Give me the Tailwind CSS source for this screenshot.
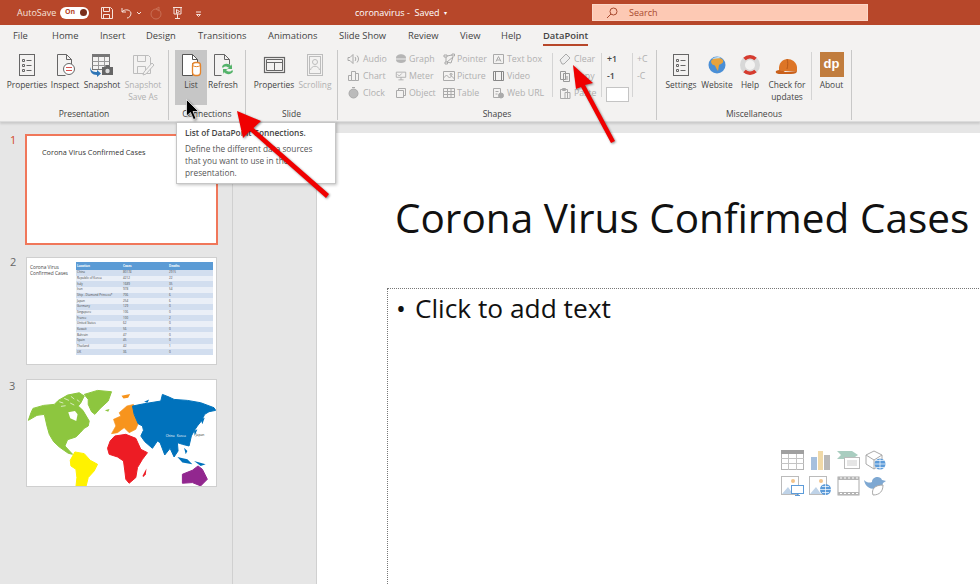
<!DOCTYPE html>
<html>
<head>
<meta charset="utf-8">
<script src="https://cdn.jsdelivr.net/npm/@tailwindcss/browser@4"></script>
</head>
<body class="m-0 overflow-hidden bg-[#e6e6e6]">
<div class="relative w-[980px] h-[584px] overflow-hidden font-['Open_Sans','Noto_Sans',sans-serif] text-[#444]">

  <!-- Title bar -->
  <header class="h-[25px] bg-[#b7472a] flex items-center text-white text-[9px] pl-[17px]">
    <span class="w-[43px] text-[#f6e3dc]">AutoSave</span>
    <span class="w-[29px] h-[12px] rounded-full bg-white flex items-center justify-between pl-[5px] pr-[2px] text-[#b7472a] text-[7px] font-bold"><span>On</span><span class="w-[7px] h-[7px] rounded-full bg-[#7a2f1c]"></span></span>
    <svg class="ml-[6px]" width="110" height="16" viewBox="0 0 110 16" fill="none" stroke="#f6e3dc" stroke-width="1">
      <path d="M6.500 2.500h9l2 2v9h-11z M8.500 2.500v4h6v-4 M8.500 13.500v-4h6v4"/>
      <path d="M27 3v4h4 M27 7c2-3 8-3 9 1 0 3-2 5-4 5"/>
      <path d="M42 7l2 2 2-2" />
      <circle cx="61" cy="9" r="5" stroke="#c96f55"/><path d="M61 4l3-2v4z" stroke="#c96f55"/>
      <path d="M78 2.500h9 M79 3v6h7V3 M82.500 9v4 M80 13.500h5 M81.500 4.500l3 2-3 2z"/>
      <path d="M101 7h5 M101.500 9.500l2 2 2-2z" />
    </svg>
    <span class="ml-[150px] w-[237px] whitespace-nowrap">coronavirus&nbsp;-&nbsp; Saved&nbsp; <span class="text-[6px] align-middle">▾</span></span>
    <div class="w-[276px] h-[17px] bg-[#fdc9b4] border border-[#fbd7c8] flex items-center pl-[12px] text-[#a8492f]">
      <svg width="14" height="14" viewBox="0 0 14 14" fill="none" stroke="#a8492f"><circle cx="8.500" cy="5.500" r="3.500"/><path d="M6 8l-4 4"/></svg>
      <span class="ml-[10px]">Search</span>
    </div>
  </header>

  <!-- Tabs -->
  <nav class="h-[22px] bg-[#f3f2f1] flex items-center text-[9.4px] pl-[13px] pt-[1px] text-[#444]">
    <span class="w-[39px]">File</span>
    <span class="w-[48px]">Home</span>
    <span class="w-[46px]">Insert</span>
    <span class="w-[52px]">Design</span>
    <span class="w-[70px]">Transitions</span>
    <span class="w-[71px]">Animations</span>
    <span class="w-[69px]">Slide Show</span>
    <span class="w-[52px]">Review</span>
    <span class="w-[41px]">View</span>
    <span class="w-[42px]">Help</span>
    <span class="relative font-semibold">DataPoint<span class="absolute left-0 right-0 top-[15px] h-[2px] bg-[#b7472a]"></span></span>
  </nav>

  <!-- Ribbon -->
  <section class="h-[75px] bg-[#f3f2f1] flex text-[8.400px] leading-[12px] shadow-[0_2px_2px_rgba(0,0,0,0.12)] relative z-10 border-b border-[#dcdcdc]">

    <!-- Presentation -->
    <div class="w-[169px] flex flex-col border-r border-[#c8c8c8] mt-[3px] h-[70px]">
      <div class="flex h-[62px] pl-[7px]">
        <div class="w-[40px] flex flex-col items-center">
          <svg class="mt-[3px]" width="20" height="24" viewBox="0 0 20 24" fill="none" stroke="#666"><rect x="2.500" y="1.500" width="15" height="21"/><path d="M5.500 6.500h2v2h-2z M5.500 11.500h2v2h-2z M5.500 16.500h2v2h-2z M9.500 7.500h5 M9.500 12.500h5 M9.500 17.500h5"/></svg>
          <span class="mt-[2px] whitespace-nowrap">Properties</span>
        </div>
        <div class="w-[36px] flex flex-col items-center">
          <svg class="mt-[3px]" width="24" height="24" viewBox="0 0 24 24" fill="none" stroke="#666"><path d="M4.500 1.500h9l5 5v5 M13.500 1.500v5h5 M4.500 1.500v21h8"/><circle cx="16" cy="16" r="5.500" fill="#fff"/><path d="M13 14.500h6 M13 17.500h6" stroke="#d9534f"/></svg>
          <span class="mt-[2px]">Inspect</span>
        </div>
        <div class="w-[38px] flex flex-col items-center">
          <svg class="mt-[3px]" width="26" height="24" viewBox="0 0 26 24" fill="none"><rect x="3.500" y="1.500" width="17" height="15" stroke="#777"/><path d="M3 1h18v3H3z" fill="#777"/><path d="M3.500 8.500h17 M3.500 12.500h17 M9.500 4v12 M15.500 4v12" stroke="#999"/><path d="M1 14c1 4 3 5 7 5v-2l4 3.500-4 3.500v-2c-5 0-7-3-7-8z" fill="#2e75b6"/><path d="M13 14h3l1-2h3l1 2h3v8H13z" fill="#666"/><circle cx="18.500" cy="18" r="2.200" fill="#ddd"/></svg>
          <span class="mt-[2px]">Snapshot</span>
        </div>
        <div class="w-[44px] flex flex-col items-center text-[#b0b0b0] text-center">
          <svg class="mt-[3px]" width="24" height="24" viewBox="0 0 24 24" fill="none" stroke="#bdbdbd"><path d="M2.500 2.500h15l2 2v16h-17z M6.500 2.500v6h8v-6 M6.500 20.500v-7h8v7"/><path d="M13 19l8-9 2 2-8 9-3 1z" fill="#f3f2f1"/></svg>
          <span class="mt-[2px]">Snapshot<br>Save As</span>
        </div>
      </div>
      <div class="text-center text-[8.500px] mt-[1px]">Presentation</div>
    </div>

    <!-- Connections -->
    <div class="w-[77px] flex flex-col border-r border-[#c8c8c8] mt-[3px] h-[70px]">
      <div class="flex h-[62px] pl-[6px]">
        <div class="w-[32px] h-[55px] bg-[#c6c6c6] flex flex-col items-center">
          <svg class="mt-[3px]" width="24" height="24" viewBox="0 0 24 24" fill="none"><path d="M3.500 1.500h10l5 5v4h-5v12h-10z" fill="#fff" stroke="#555"/><path d="M13.500 1.500v5h5" stroke="#555"/><rect x="13.500" y="9.500" width="8" height="13" rx="3" fill="#fff" stroke="#e5842b" stroke-width="1.300"/><path d="M13.500 12.500c2 1.500 6 1.500 8 0" stroke="#e5842b"/></svg>
          <span class="mt-[2px]">List</span>
        </div>
        <div class="w-[32px] flex flex-col items-center">
          <svg class="mt-[3px]" width="24" height="24" viewBox="0 0 24 24" fill="none"><path d="M3.500 1.500h10l5 5v5 M13.500 1.500v5h5 M3.500 1.500v21h7" stroke="#666"/><path d="M11 14c1-4 7-4 9-1l1-2v5h-5l2-1c-2-2-5-2-6 0z M22 18c-1 4-7 4-9 1l-1 2v-5h5l-2 1c2 2 5 2 6 0z" fill="#54b36a"/></svg>
          <span class="mt-[2px]">Refresh</span>
        </div>
      </div>
      <div class="text-center text-[8.500px] mt-[1px]">Connections</div>
    </div>

    <!-- Slide -->
    <div class="w-[92px] flex flex-col border-r border-[#c8c8c8] mt-[3px] h-[70px]">
      <div class="flex h-[62px] pl-[8px]">
        <div class="w-[40px] flex flex-col items-center">
          <svg class="mt-[3px]" width="24" height="24" viewBox="0 0 24 24" fill="none" stroke="#666"><rect x="2.500" y="4.500" width="20" height="15" stroke-width="1.200"/><path d="M4.500 9.500h16 M12.500 9.500v8 M4.500 6.500v11h16v-11z"/></svg>
          <span class="mt-[2px] whitespace-nowrap">Properties</span>
        </div>
        <div class="w-[42px] flex flex-col items-center text-[#b0b0b0]">
          <svg class="mt-[3px]" width="22" height="24" viewBox="0 0 22 24" fill="none" stroke="#bdbdbd"><rect x="3.500" y="1.500" width="15" height="21"/><rect x="5.500" y="3.500" width="11" height="17"/><circle cx="11" cy="9" r="2.500"/><path d="M6.500 17c1-5 8-5 9 0"/></svg>
          <span class="mt-[2px]">Scrolling</span>
        </div>
      </div>
      <div class="text-center text-[8.500px] mt-[1px]">Slide</div>
    </div>

    <!-- Shapes -->
    <div class="w-[319px] flex flex-col border-r border-[#c8c8c8] mt-[3px] h-[70px] text-[8.800px]">
      <div class="flex h-[62px] pl-[9px] pt-[3px] text-[#b0b0b0]">
        <div class="w-[48px] flex flex-col gap-[5px]">
          <div class="h-[12px] flex items-center gap-[3px]"><svg width="13" height="12" viewBox="0 0 13 12" fill="none" stroke="#aaa"><path d="M1 4.500h2l3-3v9l-3-3H1z M8 4c1 1 1 3 0 4 M10 2.500c2 2 2 5 0 7"/></svg>Audio</div>
          <div class="h-[12px] flex items-center gap-[3px]"><svg width="13" height="12" viewBox="0 0 13 12" fill="none" stroke="#aaa"><path d="M1.500 5.500h3v5h-3z M4.500 1.500h4v9h-4z M8.500 3.500h3v7h-3z"/></svg>Chart</div>
          <div class="h-[12px] flex items-center gap-[3px]"><svg width="13" height="12" viewBox="0 0 13 12" fill="#bbb" stroke="#aaa"><circle cx="6.500" cy="6.500" r="4.500"/><path d="M5 .5h3" fill="none"/></svg>Clock</div>
        </div>
        <div class="w-[48px] flex flex-col gap-[5px]">
          <div class="h-[12px] flex items-center gap-[2px]"><svg width="12" height="12" viewBox="0 0 12 12" fill="#b5b5b5"><path d="M1 5c0-5 10-5 10 0v2c0 4-10 4-10 0z"/><path d="M1 6h10" stroke="#eee"/></svg>Graph</div>
          <div class="h-[12px] flex items-center gap-[2px]"><svg width="12" height="12" viewBox="0 0 14 12" fill="none" stroke="#aaa"><path d="M1.500 1.500h11v6h-11z M7 7.500v3 M4 10.500h6 M3 4l2 2 3-3"/></svg>Meter</div>
          <div class="h-[12px] flex items-center gap-[2px]"><svg width="12" height="12" viewBox="0 0 12 12" fill="none" stroke="#aaa"><path d="M3.500 3.500v-2h7v7h-2 M1.500 3.500h7v7h-7z"/></svg>Object</div>
        </div>
        <div class="w-[50px] flex flex-col gap-[5px]">
          <div class="h-[12px] flex items-center gap-[2px]"><svg width="12" height="12" viewBox="0 0 12 12" fill="none" stroke="#aaa"><path d="M1 2h3v2H1z M9 1h2.500v2H9z M2 11h2.500V9H2z M4 3l5-1 M3 4v5 M4 9l6-5 -2 6z"/></svg>Pointer</div>
          <div class="h-[12px] flex items-center gap-[2px]"><svg width="12" height="12" viewBox="0 0 12 12" fill="none" stroke="#aaa"><path d="M.5 1.500h11v9H.5z M.5 8l3-3 3 3 2-2 3 3 M8 3.500a1 1 0 1 0 .1 0"/></svg>Picture</div>
          <div class="h-[12px] flex items-center gap-[2px]"><svg width="12" height="12" viewBox="0 0 12 12" fill="none" stroke="#aaa"><path d="M.5 1.500h11v9H.5z M.5 4.500h11 M.5 7.500h11 M4.500 1.500v9 M8 1.500v9"/></svg>Table</div>
        </div>
        <div class="w-[59px] flex flex-col gap-[5px]">
          <div class="h-[12px] flex items-center gap-[3px]"><svg width="11" height="12" viewBox="0 0 11 12" fill="none" stroke="#aaa"><path d="M.5 1.500h10v9H.5z M3 8.500l2.500-5 2.500 5 M4 7h3"/></svg>Text box</div>
          <div class="h-[12px] flex items-center gap-[3px]"><svg width="11" height="12" viewBox="0 0 11 12" fill="none" stroke="#888"><path d="M.5 1.500h10v9H.5z M2.500 1.500v9 M8.500 1.500v9"/></svg>Video</div>
          <div class="h-[12px] flex items-center gap-[3px]"><svg width="11" height="12" viewBox="0 0 11 12" fill="none" stroke="#aaa"><path d="M.5 1.500h7v9H.5z M2.500 4.500h3 M2.500 7h2"/><circle cx="8" cy="8.500" r="2.500" fill="#aaa"/></svg>Web URL</div>
        </div>
        <div class="w-[49px] pl-[6px] border-l border-[#d4d4d4] h-[44px] flex flex-col gap-[5px]">
          <div class="h-[12px] flex items-center gap-[3px]"><svg width="12" height="12" viewBox="0 0 12 12" fill="#eee" stroke="#aaa"><path d="M1 7l6-6 4 4-6 6H3z"/></svg>Clear</div>
          <div class="h-[12px] flex items-center gap-[3px]"><svg width="12" height="12" viewBox="0 0 12 12" fill="none" stroke="#999"><path d="M1.500 1.500h5v8h-5z M4.500 3.500h6v8h-6z M6 7h3 M6 9h3"/></svg>Copy</div>
          <div class="h-[12px] flex items-center gap-[3px]"><svg width="12" height="12" viewBox="0 0 12 12" fill="none" stroke="#aaa"><path d="M1.500 2.500h7v9h-7z M3.500 1.500h3v2h-3z M6 5.500h5v6H6z"/></svg>Paste</div>
        </div>
        <div class="w-[31px] pl-[5px] border-l border-[#d4d4d4] h-[44px] flex flex-col gap-[5px] text-[#444] font-semibold">
          <div class="h-[12px] flex items-center">+1</div>
          <div class="h-[12px] flex items-center">-1</div>
          <div class="-ml-[1px] w-[23px] h-[15px] bg-white border border-[#c4c4c4] shrink-0"></div>
        </div>
        <div class="pl-[4px] border-l border-[#d4d4d4] h-[44px] flex flex-col gap-[5px]">
          <div class="h-[12px] flex items-center">+C</div>
          <div class="h-[12px] flex items-center">-C</div>
        </div>
      </div>
      <div class="text-center text-[8.500px] mt-[1px]">Shapes</div>
    </div>

    <!-- Miscellaneous -->
    <div class="w-[195px] flex flex-col border-r border-[#c8c8c8] mt-[3px] h-[70px]">
      <div class="flex h-[62px] pl-[6px]">
        <div class="w-[36px] flex flex-col items-center">
          <svg class="mt-[3px]" width="20" height="24" viewBox="0 0 20 24" fill="none" stroke="#666"><rect x="2.500" y="1.500" width="15" height="21"/><path d="M5.500 6.500h2v2h-2z M5.500 11.500h2v2h-2z M5.500 16.500h2v2h-2z M9.500 7.500h5 M9.500 12.500h5 M9.500 17.500h5"/></svg>
          <span class="mt-[2px]">Settings</span>
        </div>
        <div class="w-[36px] flex flex-col items-center">
          <svg class="mt-[3px]" width="20" height="24" viewBox="0 0 20 24"><circle cx="10" cy="12" r="8.500" fill="#4a8fd6"/><path d="M4 8c3-4 9-4 12-1 1 3-2 4-4 5l-1 6c-2-2-2-5-4-6-2 0-3-2-3-4z" fill="#e8a33d"/><path d="M5 6c2-2 7-3 9-1-3 0-6 1-9 1z" fill="#bfe0f5"/></svg>
          <span class="mt-[2px]">Website</span>
        </div>
        <div class="w-[30px] flex flex-col items-center">
          <svg class="mt-[3px]" width="22" height="24" viewBox="0 0 22 24" fill="none"><circle cx="11" cy="12" r="7.500" stroke="#d8d8d8" stroke-width="5"/><path d="M5.500 6a8 8 0 0 1 11 0 M5.500 18a8 8 0 0 0 11 0" stroke="#d63b2f" stroke-width="3.500"/></svg>
          <span class="mt-[2px]">Help</span>
        </div>
        <div class="w-[44px] flex flex-col items-center text-center">
          <svg class="mt-[3px]" width="24" height="24" viewBox="0 0 24 24"><path d="M4 17c-1-14 16-14 18-3l0 4H8z" fill="#dd7526"/><path d="M1 18c3-2 7-1 9 1l12-1c0 2-2 3-6 3H5c-3 0-5-1-4-3z" fill="#c9601a"/><path d="M12 6c1 3 1 6 0 10" stroke="#b95a1a" fill="none"/></svg>
          <span class="mt-[2px] whitespace-nowrap">Check for<br>updates</span>
        </div>
        <div class="ml-[2px] w-[40px] border-l border-[#d4d4d4] h-[48px] mt-[2px] flex flex-col items-center">
          <div class="w-[24px] h-[25px] bg-[#c17d3e] text-white font-bold text-[13px] leading-[24px] text-center font-['Liberation_Sans',sans-serif] shrink-0">dp</div>
          <span class="mt-[2px]">About</span>
        </div>
      </div>
      <div class="text-center text-[8.500px] mt-[1px]">Miscellaneous</div>
    </div>
  </section>

  <!-- Work area -->
  <main class="flex h-[462px]">
    <aside class="w-[233px] bg-[#e6e6e6] border-r border-[#d0d0d0] shrink-0 pt-[12px] relative">
      <div class="flex h-[110px]">
        <span class="w-[25px] pl-[10px] text-[11px] leading-[14px] text-[#d24726] -mt-[1px]">1</span>
        <div class="w-[193px] h-[111px] bg-white border-2 border-[#f0775a] pl-[15px] pt-[11px] text-[7.300px] leading-[10px] text-[#333]">Corona Virus Confirmed Cases</div>
      </div>
      <div class="flex mt-[13px] h-[108px]">
        <span class="w-[26px] pl-[10px] text-[11px] leading-[14px] text-[#666] -mt-[2px]">2</span>
        <div class="w-[191px] h-[108px] bg-white border border-[#cfcfcf] flex pt-[4px]">
          <div class="w-[49px] pl-[3px] pt-[2px] text-[4.800px] leading-[6px] text-[#444]">Corona Virus<br>Confirmed Cases</div>
          <table class="w-[137px] h-[93px] text-[3px] leading-[3px] border-collapse table-fixed text-[#444]">
            <tbody>
              <tr class="bg-[#5b9bd5] text-white h-[8px] font-bold"><td class="pl-[1px] w-[46px]">Location</td><td class="pl-[1px] w-[46px]">Cases</td><td class="pl-[1px]">Deaths</td></tr>
              <tr class="bg-[#d2deef]"><td class="pl-[1px]">China</td><td class="pl-[1px]">80174</td><td class="pl-[1px]">2915</td></tr>
              <tr class="bg-[#eaeff7]"><td class="pl-[1px]">Republic of Korea</td><td class="pl-[1px]">4212</td><td class="pl-[1px]">22</td></tr>
              <tr class="bg-[#d2deef]"><td class="pl-[1px]">Italy</td><td class="pl-[1px]">1689</td><td class="pl-[1px]">35</td></tr>
              <tr class="bg-[#eaeff7]"><td class="pl-[1px]">Iran</td><td class="pl-[1px]">978</td><td class="pl-[1px]">54</td></tr>
              <tr class="bg-[#d2deef]"><td class="pl-[1px]">Ship - Diamond Princess*</td><td class="pl-[1px]">706</td><td class="pl-[1px]">6</td></tr>
              <tr class="bg-[#eaeff7]"><td class="pl-[1px]">Japan</td><td class="pl-[1px]">254</td><td class="pl-[1px]">6</td></tr>
              <tr class="bg-[#d2deef]"><td class="pl-[1px]">Germany</td><td class="pl-[1px]">129</td><td class="pl-[1px]">0</td></tr>
              <tr class="bg-[#eaeff7]"><td class="pl-[1px]">Singapore</td><td class="pl-[1px]">106</td><td class="pl-[1px]">0</td></tr>
              <tr class="bg-[#d2deef]"><td class="pl-[1px]">France</td><td class="pl-[1px]">100</td><td class="pl-[1px]">2</td></tr>
              <tr class="bg-[#eaeff7]"><td class="pl-[1px]">United States</td><td class="pl-[1px]">62</td><td class="pl-[1px]">0</td></tr>
              <tr class="bg-[#d2deef]"><td class="pl-[1px]">Kuwait</td><td class="pl-[1px]">56</td><td class="pl-[1px]">0</td></tr>
              <tr class="bg-[#eaeff7]"><td class="pl-[1px]">Bahrain</td><td class="pl-[1px]">47</td><td class="pl-[1px]">0</td></tr>
              <tr class="bg-[#d2deef]"><td class="pl-[1px]">Spain</td><td class="pl-[1px]">45</td><td class="pl-[1px]">0</td></tr>
              <tr class="bg-[#eaeff7]"><td class="pl-[1px]">Thailand</td><td class="pl-[1px]">42</td><td class="pl-[1px]">1</td></tr>
              <tr class="bg-[#d2deef]"><td class="pl-[1px]">UK</td><td class="pl-[1px]">36</td><td class="pl-[1px]">0</td></tr>
            </tbody>
          </table>
        </div>
      </div>
      <div class="flex mt-[14px]">
        <span class="w-[26px] pl-[9px] text-[11px] leading-[14px] text-[#666]">3</span>
        <div class="w-[191px] h-[108px] bg-white border border-[#cfcfcf] overflow-hidden">
          <svg width="190" height="107" viewBox="78 27 571 321">
            <path fill="#8dc63f" stroke="#8dc63f" stroke-width="3" d="M82 148L90 125 96 112 128 103 160 100 172 88 200 72 235 65 250 75 240 95 232 105 246 118 265 150 262 165 250 172 238 185 225 198 200 206 192 225 215 250 202 247 175 228 158 212 145 190 138 165 130 130 108 133Z"/>
            <path fill="#8dc63f" stroke="#8dc63f" stroke-width="3" d="M250 70L290 58 332 62 322 90 298 112 282 130 272 122 262 100 262 85Z"/>
            <path fill="#fff" d="M202 124L222 120 230 130 226 150 208 142Z"/>
            <path fill="none" stroke="#fff" stroke-width="2" d="M175 92l12 4M190 82l14 6M210 76l10 8M180 106l14-2M208 96l12 6M228 86l8 6"/>
            <path fill="#8dc63f" d="M312 118L326 114 322 122Z"/>
            <path fill="#fff200" stroke="#fff200" stroke-width="3" d="M208 268L222 243 250 248 268 268 290 280 280 300 262 320 255 348 225 348 228 320 225 295 210 285Z"/>
            <path fill="#ed1c24" stroke="#ed1c24" stroke-width="3" d="M320 232L328 210 342 195 375 190 405 202 420 235 440 245 425 265 410 290 405 320 385 337 375 325 372 300 368 270 350 258 325 250Z"/>
            <path fill="#ed1c24" d="M425 315L437 293 435 310 428 318Z"/>
            <path fill="#f7941d" stroke="#f7941d" stroke-width="2" d="M332 188L345 165 338 145 360 135 355 125 378 105 398 100 400 130 412 158 405 175 385 185 370 170 350 185Z"/>
            <path fill="#f7941d" d="M362 74L388 69 382 80 368 82Z"/>
            <path fill="#0072bc" stroke="#0072bc" stroke-width="3" d="M395 105L430 98 480 90 485 70 505 78 520 85 560 88 600 95 640 110 645 118 625 122 612 130 602 150 590 165 580 180 572 195 565 225 545 220 530 215 532 240 520 258 508 232 492 252 478 215 470 210 455 232 432 212 420 195 428 178 425 165 412 158 400 130Z"/>
            <path fill="#0072bc" d="M600 145L612 140 605 160Z M580 180L590 175 582 195Z M530 258L560 265 575 280 545 275Z M580 270L615 280 600 285Z M550 230L560 240 555 250Z M430 92L445 85 440 95Z"/>
            <path fill="#92278f" stroke="#92278f" stroke-width="3" d="M545 310L575 298 592 285 605 295 620 325 600 345 575 335 545 337Z"/>
            <text x="495" y="199" font-size="10" fill="#fff">China</text><text x="528" y="199" font-size="10" fill="#fff">Korea</text><text x="585" y="196" font-size="10" fill="#333">Japan</text>
          </svg>
        </div>
      </div>
    </aside>
    <div class="w-[83px] bg-[#e6e6e6] shrink-0"></div>
    <div class="flex-1 mt-[11px] bg-white border-l border-[#d0d0d0] overflow-hidden relative">
      <h1 class="ml-[78px] mt-[58px] text-[40.500px] leading-[54px] whitespace-nowrap text-[#111] font-normal">Corona Virus Confirmed Cases</h1>
      <div class="ml-[70px] mt-[43px] w-[700px] h-[400px] border border-dotted border-[#777] pl-[8px] pt-[3px] text-[26.300px] leading-[32px] text-[#111]">•<span class="ml-[9px]">Click to add text</span>
        <div class="mt-[126px] ml-[385px] w-[106px] grid grid-cols-4 gap-x-[5px] gap-y-[6px]">
          <svg width="23" height="20" viewBox="0 0 23 20" fill="none"><rect x=".5" y=".5" width="22" height="19" fill="#fff" stroke="#b5b5b5"/><path d="M0 0h23v4H0z" fill="#a0a0a0"/><path d="M0 8.500h23 M0 13.500h23 M7.500 4v16 M15.500 4v16" stroke="#c4c4c4"/></svg>
          <svg width="23" height="20" viewBox="0 0 23 20"><path d="M2 7h6v13H2z" fill="#a6c0de"/><path d="M9 1h5v19H9z" fill="#f0d9a8"/><path d="M15 5h6v15h-6z" fill="#b9b9b9"/></svg>
          <svg width="23" height="20" viewBox="0 0 23 20"><path d="M0 1h15l6 4-6 4H0l4-4z" fill="#a9cdc0"/><rect x="7.500" y="7.500" width="15" height="11" fill="#fff" stroke="#bbb"/><path d="M10 11h10 M10 13h10 M10 15h10" stroke="#ccc"/></svg>
          <svg width="23" height="20" viewBox="0 0 23 20" fill="none"><path d="M2 5l8-4 8 4v9l-8 5-8-5z M2 5l8 5 8-5 M10 10v9" stroke="#aaa"/><circle cx="16" cy="14" r="5.500" fill="#5c9bd9"/><path d="M10.500 14h11 M16 8.500v11 M12 10.500h8 M12 17.500h8" stroke="#fff" stroke-width=".7"/></svg>
          <svg width="23" height="20" viewBox="0 0 23 20"><rect x=".5" y=".5" width="17" height="18" fill="#fff" stroke="#bbb"/><circle cx="12" cy="5" r="2" fill="#f3c48c"/><path d="M1 18l6-7 5 7z" fill="#bfd3e8"/><rect x="10.500" y="9.500" width="12" height="8" fill="#fff" stroke="#5c9bd9"/><path d="M14 19.500h5 M16.500 17.500v2" stroke="#5c9bd9"/></svg>
          <svg width="23" height="20" viewBox="0 0 23 20"><rect x=".5" y=".5" width="17" height="18" fill="#fff" stroke="#bbb"/><circle cx="12" cy="5" r="2" fill="#f3c48c"/><path d="M1 18l6-7 5 7z" fill="#bfd3e8"/><circle cx="16.500" cy="13.500" r="5.500" fill="#5c9bd9"/><path d="M11 13.500h11 M16.500 8v11 M13 10.500h7 M13 16.500h7" stroke="#fff" stroke-width=".7"/></svg>
          <svg width="23" height="20" viewBox="0 0 23 20"><rect x="1" y="1" width="21" height="18" fill="#fff" stroke="#aaa"/><path d="M1 1h21v3H1z M1 16h21v3H1z" fill="#b5b5b5"/><path d="M3 2h2M7 2h2M11 2h2M15 2h2M19 2h2M3 17.500h2M7 17.500h2M11 17.500h2M15 17.500h2M19 17.500h2" stroke="#fff"/></svg>
          <svg width="23" height="20" viewBox="0 0 23 20"><path d="M0 4c3 3 6 3 8 2 0-5 8-7 10-2l4 1-3 2c-1 5-4 6-8 6C5 13 1 10 0 4z" fill="#7ea8d2"/><path d="M9 19c-2-6 2-10 10-10 0 6-3 10-10 10z" fill="#fff" stroke="#aaa"/></svg>
        </div>
      </div>
    </div>
  </main>

  <!-- Tooltip -->
  <div class="absolute left-[176px] top-[122px] w-[160px] h-[62px] z-20 bg-white border border-[#c6c6c6] shadow-[1px_1px_3px_rgba(0,0,0,0.25)] px-[8px] pt-[3px] text-[8.300px] leading-[12px] text-[#555]">
    <div class="font-semibold text-[#444] mt-[1px] whitespace-nowrap">List of DataPoint Connections.</div>
    <div class="mt-[4px]">Define the different data sources that you want to use in the presentation.</div>
  </div>

  <!-- Annotation arrows and cursor -->
  <svg class="absolute left-0 top-0 z-30 drop-shadow-[1px_1px_1px_rgba(0,0,0,0.45)]" width="980" height="584" viewBox="0 0 980 584">
    <path fill="#f00000" d="M237 111L261 121 253.500 128 329 194 326 198 250 131 243 138Z"/>
    <path fill="#f00000" d="M573 65L593 83 585 85 615 141 611 143 581 87 576 89Z"/>
    <path fill="#000" stroke="#fff" stroke-width=".7" d="M186.500 99.500V116l4-3.500 3 7 2.500-1-3-7h5.500Z"/>
  </svg>
</div>
</body>
</html>
